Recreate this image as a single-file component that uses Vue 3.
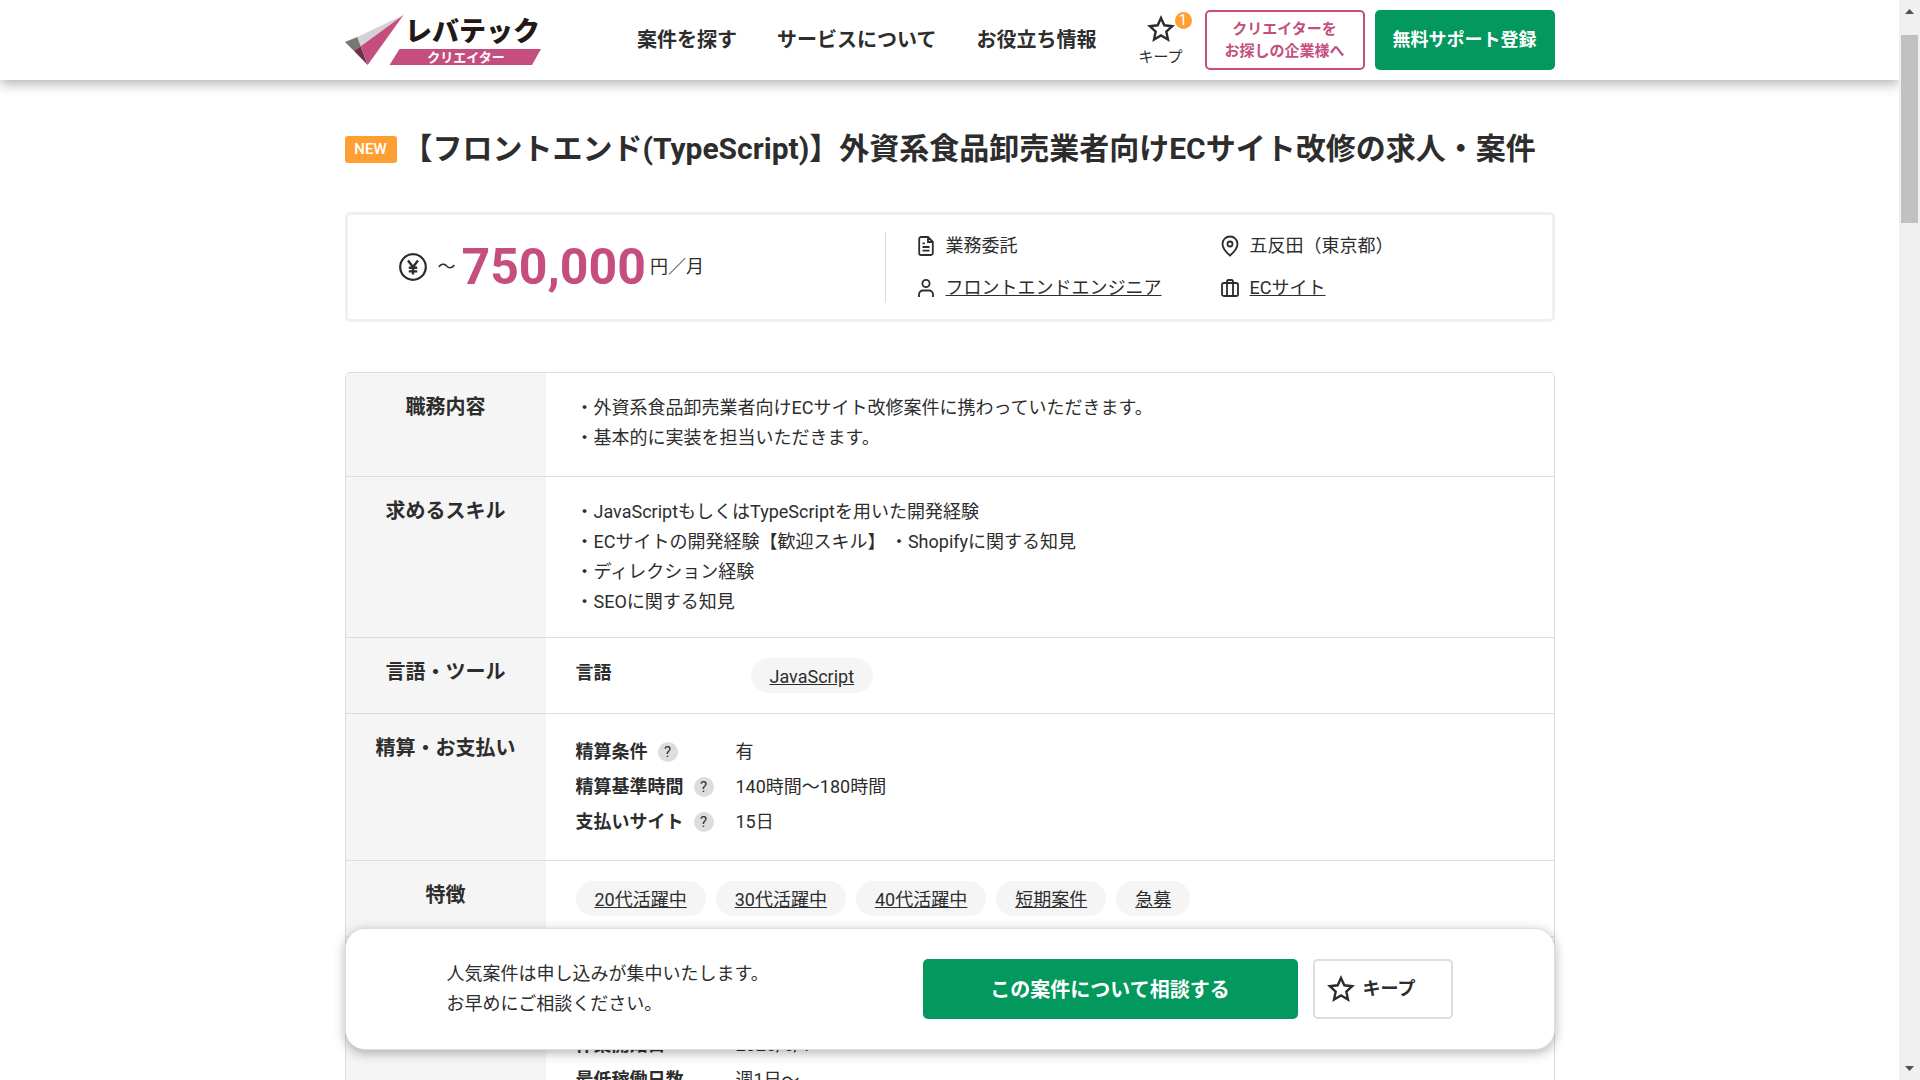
<template>
  <div class="screen">
    <div class="view">
      <header class="header">
        <div class="container header-inner">
          <a class="logo" href="#" aria-label="レバテッククリエイター">
            <svg width="196" height="52" viewBox="0 0 196 52">
              <polygon points="58.5,1 12.3,23 15.7,32.3" fill="#d3d3d3" />
              <polygon points="0,28 12.3,23 15.7,32.3 9,37" fill="#7a7674" />
              <polygon points="9,37 15.7,32.3 22.7,51" fill="#6f3148" />
              <polygon points="58.5,1 15.7,32.3 22.7,51" fill="#c44f7f" />
              <polygon points="54.5,35 196,35 187,51 44.5,51" fill="#c44f7f" />
              <text class="logo-name" x="60" y="27">レバテック</text>
              <text class="logo-sub" x="121" y="48" text-anchor="middle">クリエイター</text>
            </svg>
          </a>
          <nav class="nav">
            <a v-for="item in navItems" :key="item" href="#">{{ item }}</a>
          </nav>
          <a class="keep" href="#">
            <svg width="28" height="28" viewBox="0 0 28 28" class="icon">
              <path :d="starPath" stroke-width="2.4" />
            </svg>
            <span class="keep-badge">1</span>
            <span class="keep-text">キープ</span>
          </a>
          <a class="btn-company" href="#">クリエイターを<br />お探しの企業様へ</a>
          <a class="btn-entry" href="#">無料サポート登録</a>
        </div>
      </header>

      <main class="container">
        <div class="heading">
          <span class="new">NEW</span>
          <h1>【フロントエンド(TypeScript)】外資系食品卸売業者向けECサイト改修の求人・案件</h1>
        </div>

        <section class="summary">
          <div class="price">
            <svg width="28" height="28" viewBox="0 0 28 28" class="icon">
              <circle cx="14" cy="14" r="12.8" stroke-width="2.2" />
              <path d="M9 7.5l5 6.5 5-6.5M14 14v7.5M9.8 14.8h8.4M9.8 18.4h8.4" stroke-width="2.4" />
            </svg>
            <span class="price-from">〜</span>
            <strong>750,000</strong>
            <span class="price-unit">円／月</span>
          </div>
          <ul class="facts">
            <li>
              <svg width="20" height="22" viewBox="0 0 20 22" class="icon">
                <path d="M12 2H5a1.8 1.8 0 0 0-1.8 1.8v14.4A1.8 1.8 0 0 0 5 20h10a1.8 1.8 0 0 0 1.8-1.8V6.8zM12 2v5h4.8M6.5 8.4h2.4M6.5 12h7M6.5 15.6h7" />
              </svg>
              <span>業務委託</span>
            </li>
            <li>
              <svg width="20" height="22" viewBox="0 0 20 22" class="icon">
                <path d="M17.5 9c0 5.2-7.5 11.5-7.5 11.5S2.5 14.2 2.5 9a7.5 7.5 0 0 1 15 0z" />
                <circle cx="10" cy="9" r="2.5" />
              </svg>
              <span>五反田（東京都）</span>
            </li>
            <li>
              <svg width="20" height="22" viewBox="0 0 20 22" class="icon">
                <circle cx="10" cy="6.5" r="3.6" />
                <path d="M3 20v-2.5a4 4 0 0 1 4-4h6a4 4 0 0 1 4 4V20" />
              </svg>
              <a href="#">フロントエンドエンジニア</a>
            </li>
            <li>
              <svg width="20" height="22" viewBox="0 0 20 22" class="icon">
                <rect x="2" y="6" width="16" height="13" rx="1.8" />
                <path d="M7 19V4.600A1.600 1.600 0 0 1 8.600 3h2.800A1.600 1.600 0 0 1 13 4.600V19" />
              </svg>
              <a href="#">ECサイト</a>
            </li>
          </ul>
        </section>

        <div class="detail">
          <table>
            <tbody>
              <tr class="row-job">
                <th scope="row">職務内容</th>
                <td>
                  <p v-for="line in jobLines" :key="line">{{ line }}</p>
                </td>
              </tr>
              <tr>
                <th scope="row">求めるスキル</th>
                <td>
                  <p v-for="line in skillLines" :key="line">{{ line }}</p>
                </td>
              </tr>
              <tr>
                <th scope="row">言語・ツール</th>
                <td>
                  <div class="lang">
                    <b>言語</b>
                    <a class="tag" href="#">JavaScript</a>
                  </div>
                </td>
              </tr>
              <tr class="row-pay">
                <th scope="row">精算・お支払い</th>
                <td>
                  <dl v-for="p in payments" :key="p.label" class="pair">
                    <dt>{{ p.label }}<button type="button" class="help">?</button></dt>
                    <dd>{{ p.value }}</dd>
                  </dl>
                </td>
              </tr>
              <tr>
                <th scope="row">特徴</th>
                <td>
                  <div class="tags">
                    <a v-for="tag in features" :key="tag" class="tag" href="#">{{ tag }}</a>
                  </div>
                </td>
              </tr>
              <tr class="row-work">
                <th scope="row"></th>
                <td>
                  <dl v-for="w in works" :key="w.label" class="pair">
                    <dt>{{ w.label }}</dt>
                    <dd>{{ w.value }}</dd>
                  </dl>
                </td>
              </tr>
            </tbody>
          </table>
        </div>
      </main>

      <div class="floating">
        <div class="container floating-box">
          <p>人気案件は申し込みが集中いたします。<br />お早めにご相談ください。</p>
          <button type="button" class="btn-consult">この案件について相談する</button>
          <button type="button" class="btn-keep">
            <svg width="28" height="28" viewBox="0 0 28 28" class="icon">
              <path :d="starPath" stroke-width="2.4" />
            </svg>
            キープ
          </button>
        </div>
      </div>
    </div>

    <div class="scrollbar" aria-hidden="true">
      <svg width="9" height="5" viewBox="0 0 9 5"><path d="M0 5L4.5 0 9 5z" fill="#505050" /></svg>
      <div class="track"><div class="thumb"></div></div>
      <svg width="9" height="5" viewBox="0 0 9 5"><path d="M0 0h9L4.5 5z" fill="#505050" /></svg>
    </div>
  </div>
</template>

<script setup>
const starPath = "M14 3l3.3 7.3 7.9.9-5.9 5.4 1.7 7.9-7-4-7 4 1.7-7.9-5.9-5.4 7.9-.9z";

const navItems = ["案件を探す", "サービスについて", "お役立ち情報"];

const jobLines = [
  "・外資系食品卸売業者向けECサイト改修案件に携わっていただきます。",
  "・基本的に実装を担当いただきます。",
];

const skillLines = [
  "・JavaScriptもしくはTypeScriptを用いた開発経験",
  "・ECサイトの開発経験【歓迎スキル】 ・Shopifyに関する知見",
  "・ディレクション経験",
  "・SEOに関する知見",
];

const payments = [
  { label: "精算条件", value: "有" },
  { label: "精算基準時間", value: "140時間〜180時間" },
  { label: "支払いサイト", value: "15日" },
];

const features = ["20代活躍中", "30代活躍中", "40代活躍中", "短期案件", "急募"];

const works = [
  { label: "作業開始日", value: "2026/6/1" },
  { label: "最低稼働日数", value: "週1日〜" },
];
</script>

<style>
body { margin: 0; overflow: hidden; }
</style>

<style scoped>
* { box-sizing: border-box; }

.screen {
  display: flex; height: 100vh; overflow: hidden; background: #fff; color: #2d2d2d;
  font-family: Roboto, "Noto Sans CJK JP", sans-serif; font-size: 18px; line-height: 30px;
}
.view { flex: 1; min-width: 0; position: relative; overflow: hidden; }
.container { width: 100%; max-width: 1210px; margin: 0 auto; }

a { color: inherit; }
p, h1, ul, dl, dd { margin: 0; padding: 0; }
button { font-family: inherit; color: inherit; cursor: pointer; }
.icon { fill: none; stroke: #2d2d2d; stroke-width: 1.8; flex: none; }

.header { position: relative; background: #fff; box-shadow: 0 4px 12px rgba(0, 0, 0, 0.3); }
.header-inner { display: flex; align-items: center; height: 80px; }
.header a { text-decoration: none; }
.logo { display: flex; margin-right: auto; }
.logo svg { overflow: visible; }
.logo-name { font-size: 27px; font-weight: 900; fill: #231815; }
.logo-sub { font-size: 13px; font-weight: 700; fill: #fff; }
.nav { display: flex; gap: 40px; font-size: 20px; font-weight: 700; margin-right: 40px; }
.keep {
  position: relative; display: flex; flex-direction: column; align-items: center; gap: 3px;
  width: 48px; margin-right: 20px; padding-top: 3px;
}
.keep-text { font-size: 15px; line-height: 22px; }
.keep-badge {
  position: absolute; top: 0; right: -7px; width: 17px; height: 17px; border-radius: 50%;
  background: #ff9f33; color: #fff; font-size: 15px; line-height: 17px; text-align: center;
}
.btn-company {
  width: 160px; height: 60px; padding: 6px 0; border: 2px solid #c44f7f; border-radius: 5px;
  color: #c44f7f; font-size: 15px; font-weight: 700; line-height: 22px; text-align: center;
}
.btn-entry {
  width: 180px; height: 60px; margin-left: 10px; border-radius: 5px; background: #03985d;
  color: #fff; font-weight: 700; line-height: 60px; text-align: center;
}

.heading { display: flex; align-items: center; gap: 6px; margin-top: 46px; }
.new {
  width: 52px; height: 27px; border-radius: 3px; background: #ff9f33; color: #fff;
  font-size: 15px; font-weight: 500; line-height: 27px; text-align: center;
}
h1 { font-size: 30px; line-height: 46px; font-weight: 700; }

.summary {
  display: flex; align-items: center; margin-top: 40px; padding: 17px 0;
  border: 3px solid #f0f0f0; border-radius: 5px;
}
.price { display: flex; align-items: center; width: 537px; padding-left: 51px; }
.price-from { margin: 0 6px 0 11px; }
.price strong { font-size: 50px; line-height: 60px; font-weight: 700; color: #c44f7f; }
.price-unit { margin-left: 4px; }
.facts {
  flex: 1; display: grid; grid-template-columns: 304px 1fr; row-gap: 14px;
  padding-left: 30px; border-left: 1px solid #ddd; list-style: none; line-height: 28px;
}
.facts li { display: flex; align-items: center; gap: 10px; }

.detail { margin-top: 50px; border: 1px solid #ddd; border-radius: 5px; overflow: hidden; }
table { width: 100%; border-collapse: collapse; }
tr + tr { border-top: 1px solid #ddd; }
th { width: 200px; padding: 19px 0; background: #f5f5f5; font-size: 20px; font-weight: 700; vertical-align: top; }
td { padding: 20px 30px; vertical-align: top; }
.row-job td { padding-bottom: 23px; }
.row-pay td { padding-bottom: 21px; }
.row-work td { padding-top: 90px; }

.lang { display: flex; }
.lang b { width: 175px; }
.tags { display: flex; gap: 10px; }
.tag { height: 35px; padding: 2px 19px 0; border-radius: 18px; background: #f5f5f5; line-height: 33px; }
.pair { display: flex; line-height: 35px; }
.pair dt { display: flex; align-items: center; gap: 10px; width: 160px; font-weight: 700; white-space: nowrap; }
.help {
  width: 20px; height: 20px; padding: 0; border: 0; border-radius: 50%;
  background: #ddd; font-size: 15px; line-height: 20px; text-align: center;
}

.floating { position: absolute; left: 0; right: 0; bottom: 30px; }
.floating-box {
  display: flex; align-items: center; height: 122px; padding: 0 101px;
  border: 1px solid #ddd; border-radius: 20px; background: #fff; box-shadow: 0 3px 12px rgba(0, 0, 0, 0.3);
}
.floating-box p { margin-right: auto; }
.btn-consult {
  width: 375px; height: 60px; padding: 0 0 2px; border: 0; border-radius: 5px; background: #03985d;
  color: #fff; font-size: 20px; font-weight: 700;
}
.btn-keep {
  display: flex; align-items: center; gap: 8px; width: 140px; height: 60px; margin-left: 15px; padding: 0 12px;
  border: 2px solid #ddd; border-radius: 5px; background: #fff; font-size: 18px; font-weight: 700; line-height: 30px;
}

.scrollbar {
  display: flex; flex-direction: column; align-items: center; justify-content: space-between;
  width: 21px; padding: 9px 0; background: #f0f0f0;
}
.track { flex: 1; width: 17px; margin: 21px 0; }
.thumb { height: 188px; background: #c1c1c1; }
</style>
